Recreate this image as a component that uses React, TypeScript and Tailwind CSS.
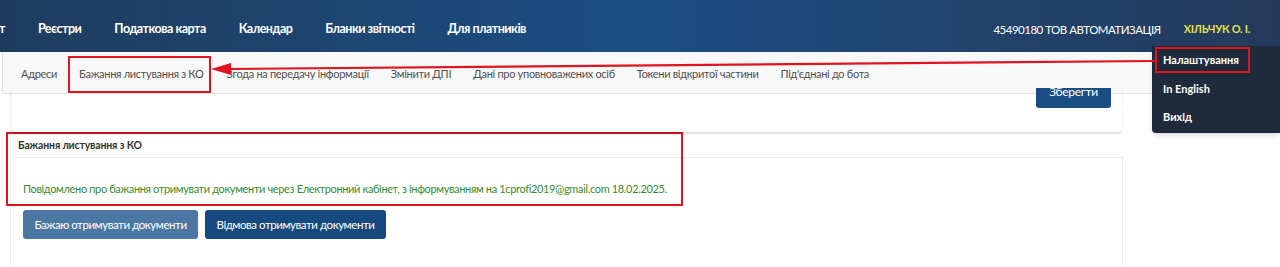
const navItems = ["Реєстри", "Податкова карта", "Календар", "Бланки звітності", "Для платників"];

const tabs = [
  "Адреси",
  "Бажання листування з КО",
  "Згода на передачу інформації",
  "Змінити ДПІ",
  "Дані про уповноважених осіб",
  "Токени відкритої частини",
  "Під'єднані до бота",
];

export default function App() {
  return (
    <div className="relative w-[1280px] h-[267px] overflow-hidden bg-white font-['Lato',sans-serif]">
      {/* top header */}
      <header className="h-[52px] flex items-center pt-[7px] bg-gradient-to-r from-[#1f3c5f] via-[#1a4e83] to-[#243a5b] text-white">
        <nav className="-ml-[1px] flex items-center gap-[33px] text-[12.5px] font-bold tracking-[-0.5px]">
          <span>т</span>
          {navItems.map((item) => (
            <span key={item}>{item}</span>
          ))}
        </nav>
        <div className="ml-auto flex items-center gap-[23px] pr-[30px] text-[11.5px] tracking-[-0.5px]">
          <span>45490180 ТОВ АВТОМАТИЗАЦІЯ</span>
          <span className="font-bold text-[11px] tracking-[-0.3px] text-[#e6e04a]">ХІЛЬЧУК О. І.</span>
        </div>
      </header>

      {/* tabs */}
      <div className="relative z-10 ml-[2px] h-[42px] flex items-center pt-[3px] pl-[7px] bg-[#f8f8f9] border-b border-l border-[#e3e3e3] text-[11px] tracking-[-0.3px] text-[#505050]">
        {tabs.map((tab, i) =>
          i === 1 ? (
            <span
              key={tab}
              className="h-[37px] flex items-center pl-[9px] pr-[5px] border-2 border-[#e0141e] mr-[5px]"
            >
              {tab}
            </span>
          ) : (
            <span key={tab} className="px-[11px]">
              {tab}
            </span>
          )
        )}
      </div>

      <div className="ml-[10px] border-l border-[#ececec] h-[180px]">
        {/* settings card, top covered by the tabs */}
        <div className="relative z-20 -mt-[6px] ml-[1px] w-[1110px] h-[44px] flex justify-end pr-[11px] shadow-[0_2px_2px_rgba(0,0,0,0.13)] rounded-b-[3px]">
          <button className="h-[20px] w-[75px] overflow-hidden rounded-b-[3px] bg-[#1b4f83] text-white text-[12px] tracking-[-0.3px]">
            <span className="block -mt-[12px] leading-[28px]">Зберегти</span>
          </button>
        </div>

        <h3 className="h-[25px] pt-[6px] pl-[7px] text-[10.5px] font-bold tracking-[-0.15px] text-[#333] leading-[14px]">
          Бажання листування з КО
        </h3>

        <div className="w-[1112px] h-[130px] border-t border-r border-[#ececec] pl-[12px] pt-[24px]">
          <p className="text-[11px] tracking-[-0.35px] leading-[14px] text-[#3a8a2f]">
            Повідомлено про бажання отримувати документи через Електронний кабінет, з інформуванням на 1cprofi2019@gmail.com 18.02.2025.
          </p>
          <div className="mt-[14px] flex gap-[7px] text-[11.5px] tracking-[-0.45px] text-white">
            <button className="h-[29px] w-[175px] rounded-[3px] bg-[#4b78a2]">
              Бажаю отримувати документи
            </button>
            <button className="h-[29px] w-[181px] rounded-[3px] bg-[#164a7e]">
              Відмова отримувати документи
            </button>
          </div>
        </div>
      </div>

      {/* red highlight around the section */}
      <div className="absolute left-[6px] top-[132px] w-[677px] h-[74px] border-2 border-[#e0141e] pointer-events-none" />

      {/* user dropdown */}
      <div className="absolute z-30 right-0 top-[46px] w-[128px] h-[87px] pt-[1px] pl-[3px] bg-[#1f2a3c] rounded-bl-[4px] shadow-md text-white text-[11px] font-bold">
        <div className="w-[95px] h-[26px] flex items-center pl-[6px] border-2 border-[#e0141e]">Налаштування</div>
        <div className="mt-[2px] h-[28px] flex items-center pl-[8px]">In English</div>
        <div className="h-[28px] flex items-center pl-[8px]">Вихід</div>
      </div>

      {/* annotation arrow */}
      <svg className="absolute inset-0 z-40 pointer-events-none" width="1280" height="267">
        <line x1="1155" y1="61" x2="226" y2="69" stroke="#e0141e" strokeWidth="2.2" />
        <polygon points="211,69 231,63 231,75" fill="#e0141e" />
      </svg>
    </div>
  );
}
